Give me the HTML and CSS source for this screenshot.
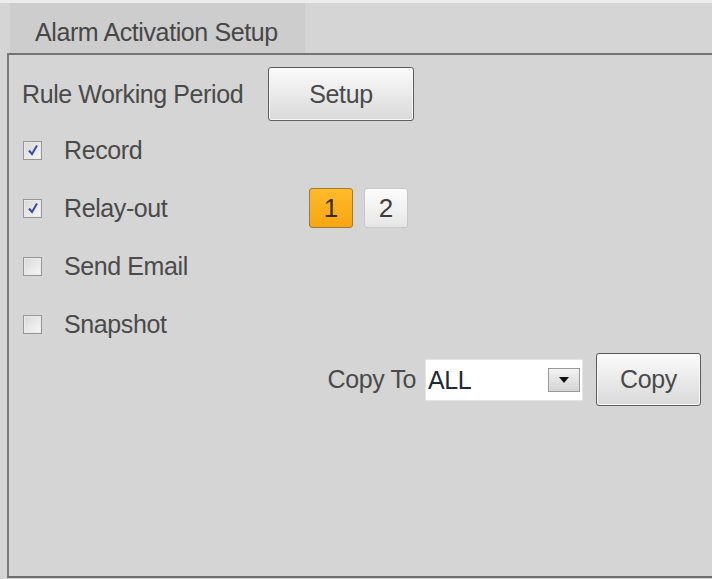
FILE: index.html
```html
<!DOCTYPE html>
<html lang="en">
<head>
    <meta charset="UTF-8">
    <title>Alarm Activation Setup</title>
    <link rel="stylesheet" href="styles.css">
</head>
<body>
    <div class="top-strip"></div>
    <div class="tabs">
        <div class="tab">Alarm Activation Setup</div>
    </div>
    <div class="panel">
        <div class="row rule-row">
            <span class="label">Rule Working Period</span>
            <button class="btn setup-btn">Setup</button>
        </div>

        <div class="row check-row">
            <span class="check checked">
                <svg width="12" height="12" viewBox="0 0 12 12"><path d="M2 6.5 L5 10 L10 1.5" fill="none" stroke="#3a4aa8" stroke-width="2"/></svg>
            </span>
            <span class="label">Record</span>
        </div>

        <div class="row check-row">
            <span class="check checked">
                <svg width="12" height="12" viewBox="0 0 12 12"><path d="M2 6.5 L5 10 L10 1.5" fill="none" stroke="#3a4aa8" stroke-width="2"/></svg>
            </span>
            <span class="label relay-label">Relay-out</span>
            <div class="relays">
                <span class="relay active">1</span>
                <span class="relay">2</span>
            </div>
        </div>

        <div class="row check-row">
            <span class="check"></span>
            <span class="label">Send Email</span>
        </div>

        <div class="row check-row">
            <span class="check"></span>
            <span class="label">Snapshot</span>
        </div>

        <div class="row copy-row">
            <span class="label">Copy To</span>
            <div class="select">
                <span class="select-value">ALL</span>
                <span class="select-arrow">
                    <svg width="10" height="6" viewBox="0 0 10 6"><path d="M0 0 L10 0 L5 6 Z" fill="#111"/></svg>
                </span>
            </div>
            <button class="btn copy-btn">Copy</button>
        </div>
    </div>
</body>
</html>
```

FILE: styles.css
```css
body {
    margin: 0;
    background: #d5d5d5;
    font-family: "Liberation Sans", Arial, sans-serif;
    color: #4a4a4a;
    width: 712px;
    height: 579px;
    overflow: hidden;
}
.top-strip {
    height: 3px;
    background: #ececec;
}
.tabs {
    display: flex;
    height: 50px;
    padding-left: 10px;
}
.tab {
    width: 295px;
    background: #cdcdcd;
    font-size: 25px;
    letter-spacing: -0.4px;
    padding-left: 25px;
    box-sizing: border-box;
    line-height: 58px;
    color: #474747;
    white-space: nowrap;
}
.panel {
    margin-left: 7px;
    height: 525px;
    box-sizing: border-box;
    border-top: 2px solid #747474;
    border-left: 2px solid #7a7a7a;
    border-bottom: 2px solid #6e6e6e;
    padding: 12px 11px 0 13px;
}
.row {
    display: flex;
    align-items: center;
}
.label {
    font-size: 25px;
    letter-spacing: -0.4px;
    color: #4a4a4a;
    white-space: nowrap;
}
.rule-row {
    height: 54px;
}
.rule-row .label {
    width: 246px;
}
.btn {
    font-family: inherit;
    font-size: 25px;
    letter-spacing: -0.4px;
    color: #4a4a4a;
    border: 1px solid #5e5e5e;
    border-radius: 3px;
    background: linear-gradient(#fbfbfb, #e8e8e8 55%, #d9d9d9);
    box-shadow: inset 0 0 0 1px #f6f6f6;
    padding: 0;
}
.setup-btn {
    width: 146px;
    height: 54px;
}
.check-row {
    height: 58px;
}
.check {
    width: 19px;
    height: 19px;
    box-sizing: border-box;
    border: 1px solid #979797;
    background: linear-gradient(135deg, #d8d8d8, #f7f7f7);
    box-shadow: inset 0 0 0 1px #e9e9e9;
    display: flex;
    align-items: center;
    justify-content: center;
    margin-left: 1px;
    margin-right: 22px;
}
.relay-label {
    width: 245px;
}
.relays {
    display: flex;
    gap: 11px;
}
.relay {
    width: 44px;
    height: 40px;
    box-sizing: border-box;
    border: 1px solid #c8c8c8;
    border-radius: 3px;
    background: linear-gradient(#fdfdfd, #e6e6e6);
    font-size: 26px;
    display: flex;
    align-items: center;
    justify-content: center;
    color: #3d3d3d;
}
.relay.active {
    border-color: #9a7a36;
    background: linear-gradient(#ffbb2a, #f7a512);
    color: #3a2a0a;
}
.copy-row {
    height: 53px;
    justify-content: flex-end;
}
.copy-row .label {
    margin-right: 9px;
}
.select {
    width: 158px;
    height: 42px;
    box-sizing: border-box;
    display: flex;
    background: #fff;
    border: 1px solid #e4e4e4;
    margin-right: 13px;
}
.select-value {
    flex: 1;
    font-size: 25px;
    letter-spacing: -0.4px;
    color: #1f2a36;
    padding-left: 2px;
    line-height: 40px;
}
.select-arrow {
    width: 30px;
    margin: 8px 2px 8px 0;
    border: 1px solid #999;
    background: linear-gradient(#f2f2f2, #d4d4d4);
    display: flex;
    align-items: center;
    justify-content: center;
}
.copy-btn {
    width: 105px;
    height: 53px;
}
```
